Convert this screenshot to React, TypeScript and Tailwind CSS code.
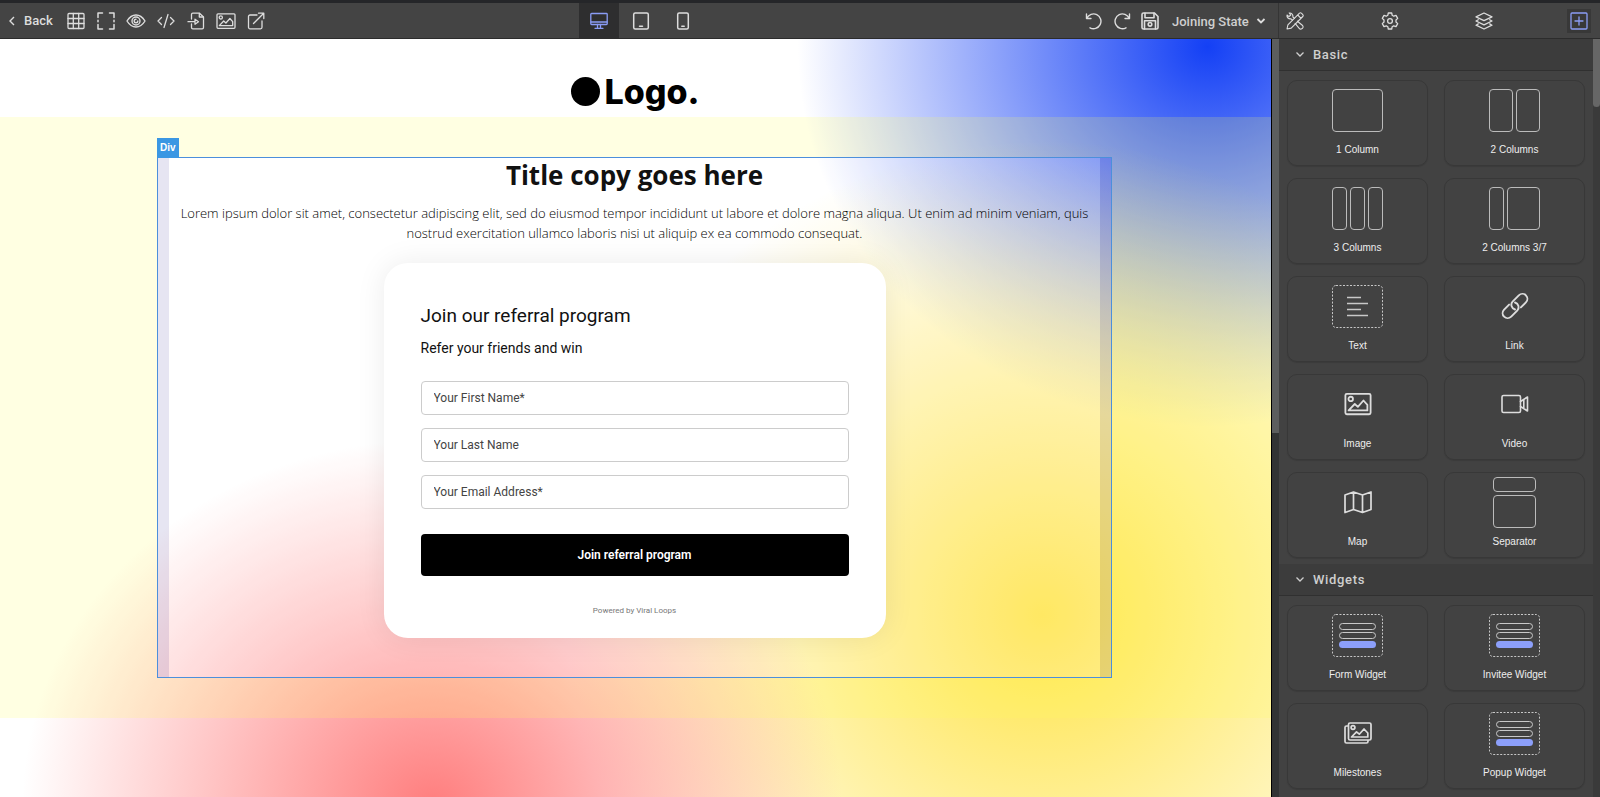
import { useState } from "react";
import clsx from "clsx";
import type { ReactNode } from "react";

const basicBlocks: Block[] = [
  { label: "1 Column", icon: <Columns cells={["flex-1"]} /> },
  { label: "2 Columns", icon: <Columns cells={["flex-1", "flex-1"]} /> },
  { label: "3 Columns", icon: <Columns cells={["flex-1", "flex-1", "flex-1"]} /> },
  { label: "2 Columns 3/7", icon: <Columns cells={["w-[15px]", "flex-1"]} /> },
  { label: "Text", icon: <TextBlock /> },
  { label: "Link", icon: <LinkIcon /> },
  { label: "Image", icon: <ImageIcon size={28} /> },
  { label: "Video", icon: <VideoIcon /> },
  { label: "Map", icon: <MapIcon /> },
  { label: "Separator", icon: <SeparatorBlock /> },
];

const widgetBlocks: Block[] = [
  { label: "Form Widget", icon: <WidgetBlock /> },
  { label: "Invitee Widget", icon: <WidgetBlock /> },
  { label: "Milestones", icon: <GalleryIcon /> },
  { label: "Popup Widget", icon: <WidgetBlock /> },
];

const devices = [
  { id: "desktop", label: "Desktop", icon: <DesktopIcon /> },
  { id: "tablet", label: "Tablet", icon: <TabletIcon /> },
  { id: "mobile", label: "Mobile", icon: <MobileIcon /> },
];

const tools = [
  { label: "Show grid", icon: <GridIcon /> },
  { label: "Fullscreen", icon: <FullscreenIcon /> },
  { label: "Preview", icon: <EyeIcon /> },
  { label: "View code", icon: <CodeIcon /> },
  { label: "Import", icon: <ImportIcon /> },
  { label: "Images", icon: <ImageIcon size={20} /> },
  { label: "Open in new tab", icon: <ExternalIcon /> },
];

const panels = [
  { id: "styles", label: "Styles", icon: <ToolsIcon /> },
  { id: "settings", label: "Settings", icon: <GearIcon /> },
  { id: "layers", label: "Layers", icon: <LayersIcon /> },
  { id: "blocks", label: "Blocks", icon: <PlusIcon /> },
];

const fields = [
  { id: "firstName", label: "Your First Name*", type: "text" },
  { id: "lastName", label: "Your Last Name", type: "text" },
  { id: "email", label: "Your Email Address*", type: "email" },
];

export default function App() {
  return (
    <div className="flex h-screen flex-col overflow-hidden border-t-[3px] border-[#252629] bg-[#424242] font-['Roboto',sans-serif] text-[#dddddd]">
      <TopBar />
      <div className="flex min-h-0 flex-1">
        <Canvas />
        <div className="w-2 shrink-0 border-l border-black bg-[#323434]">
          <div className="h-[52%] bg-[#5c5e5e]" />
        </div>
        <BlocksPanel />
      </div>
    </div>
  );
}

function TopBar() {
  const [device, setDevice] = useState("desktop");
  const [panel, setPanel] = useState("blocks");

  return (
    <header className="flex h-9 shrink-0 border-b border-[#2c2c2c] bg-[#444444]">
      <div className="grid flex-1 grid-cols-[1fr_auto_1fr] items-center border-r border-[#353535] pl-1">
        <div className="flex items-center">
          <button type="button" className="mr-2 flex items-center gap-2 pl-1 text-[13px] font-medium">
            <svg width="8" height="10" viewBox="0 0 8 10" fill="none" stroke="currentColor" strokeWidth="1.4">
              <path d="M6 1 2 5l4 4" />
            </svg>
            Back
          </button>
          {tools.map((t) => (
            <button
              key={t.label}
              type="button"
              aria-label={t.label}
              className="flex h-8 w-[30px] items-center justify-center"
            >
              {t.icon}
            </button>
          ))}
        </div>

        <div className="flex h-full gap-0.5">
          {devices.map((d) => (
            <button
              key={d.id}
              type="button"
              aria-label={d.label}
              onClick={() => setDevice(d.id)}
              className={clsx(
                "flex h-[35px] w-10 items-center justify-center",
                device === d.id && "bg-[#2e2e2f] text-[#8a9cf5]",
              )}
            >
              {d.icon}
            </button>
          ))}
        </div>

        <div className="flex items-center justify-end pr-2">
          <button type="button" aria-label="Undo" className="flex w-7 justify-center">
            <UndoIcon />
          </button>
          <button type="button" aria-label="Redo" className="flex w-7 justify-center">
            <span className="-scale-x-100">
              <UndoIcon />
            </span>
          </button>
          <button type="button" aria-label="Save" className="flex w-7 justify-center">
            <SaveIcon />
          </button>
          <div className="relative ml-2">
            <select
              aria-label="State"
              className="w-[98px] appearance-none bg-transparent text-[13px] font-medium text-[#cfcfcf]"
            >
              <option>Joining State</option>
            </select>
            <svg
              className="pointer-events-none absolute right-1 top-2"
              width="10"
              height="8"
              viewBox="0 0 10 8"
              fill="none"
              stroke="currentColor"
              strokeWidth="1.8"
            >
              <path d="m1.5 2 3.500 3.500L8.500 2" />
            </svg>
          </div>
        </div>
      </div>

      <nav className="flex w-[321px] items-center justify-between pl-1 pr-[9px]">
        {panels.map((p) => (
          <button
            key={p.id}
            type="button"
            aria-label={p.label}
            onClick={() => setPanel(p.id)}
            className={clsx(
              "flex size-6 items-center justify-center",
              panel === p.id && "bg-[#383838] text-[#8a9cf5]",
            )}
          >
            {p.icon}
          </button>
        ))}
      </nav>
    </header>
  );
}

function Canvas() {
  return (
    <main className="min-w-0 flex-1 overflow-hidden bg-white bg-[radial-gradient(410px_365px_at_34%_101%,#ff7e7e,#ff7e7e00),radial-gradient(circle_475px_at_82%_76%,#ffe448,#ffe44800),radial-gradient(410px_380px_at_95%_1%,#1440f5,#1440f500)] text-[#111111]">
      <div className="flex items-center justify-center gap-1 pb-[11px] pt-[38px]">
        <span className="size-[29px] rounded-full bg-black" />
        <span className="font-['Inter',sans-serif] text-[34px] font-extrabold leading-[29px] text-black">
          Logo.
        </span>
      </div>

      <section className="border-y-[40px] border-l-[157px] border-r-[159px] border-[#ffff5e2e]">
        <div className="relative border-x-[12px] border-[#5a50aa26] bg-white/15 bg-clip-padding pb-10 outline outline-1 -outline-offset-1 outline-[#4c8fdc]">
          <span className="absolute -left-3 -top-[19px] bg-[#3b97e3] px-[3px] font-['Liberation_Sans',sans-serif] text-[10px] font-bold leading-5 text-white">
            Div
          </span>
          <h1 className="text-center font-['Open_Sans',sans-serif] text-[26px] font-bold leading-9">
            Title copy goes here
          </h1>
          <p className="mt-2.5 text-center font-['Open_Sans',sans-serif] text-[13px] font-light leading-5 text-black">
            Lorem ipsum dolor sit amet, consectetur adipiscing elit, sed do eiusmod tempor incididunt ut
            labore et dolore magna aliqua. Ut enim ad minim veniam, quis nostrud exercitation ullamco
            laboris nisi ut aliquip ex ea commodo consequat.
          </p>
          <ReferralForm />
        </div>
      </section>
    </main>
  );
}

function ReferralForm() {
  return (
    <form
      onSubmit={(e) => e.preventDefault()}
      className="mx-auto mt-5 flex max-w-[502px] flex-col rounded-3xl bg-white px-[37px] pb-[21px] pt-[41px] shadow-[0_0_30px_rgba(0,0,0,0.08)]"
    >
      <h2 className="text-[19px] leading-6">Join our referral program</h2>
      <p className="mt-2.5 text-[14px] leading-5">Refer your friends and win</p>
      <div className="mt-[23px] flex flex-col gap-[13px]">
        {fields.map((f) => (
          <input
            key={f.id}
            id={f.id}
            type={f.type}
            aria-label={f.label}
            placeholder={f.label}
            className="h-[34px] rounded border border-[#cccccc] bg-white px-3 text-[12px] placeholder:text-[#444444]"
          />
        ))}
      </div>
      <button type="submit" className="mt-[25px] h-[42px] rounded bg-black text-[12px] font-semibold text-white">
        Join referral program
      </button>
      <p className="mt-[29px] text-center text-[8px] leading-3 text-[#777777]">Powered by Viral Loops</p>
    </form>
  );
}

function BlocksPanel() {
  return (
    <aside className="flex w-[321px] shrink-0">
      <div className="min-w-0 flex-1 overflow-hidden">
        <BlockSection title="Basic" blocks={basicBlocks} />
        <BlockSection title="Widgets" blocks={widgetBlocks} />
      </div>
      <div className="w-[7px] bg-[#3a3a3a]">
        <div className="h-[68px] rounded-b bg-[#666666]" />
      </div>
    </aside>
  );
}

type Block = { label: string; icon: ReactNode };

function BlockSection({ title, blocks }: { title: string; blocks: Block[] }) {
  const [open, setOpen] = useState(true);

  return (
    <section>
      <button
        type="button"
        aria-expanded={open}
        onClick={() => setOpen(!open)}
        className="flex h-8 w-full items-center gap-2 border-b border-[#303030] bg-[#3c3c3c] pl-4 text-[13px] font-medium tracking-wider text-[#cfcfcf]"
      >
        <svg width="10" height="8" viewBox="0 0 10 8" fill="none" stroke="currentColor" strokeWidth="1.3">
          <path d="m1.500 1.500 3.500 3.500 3.500-3.500" />
        </svg>
        {title}
      </button>
      {open && (
        <div className="grid grid-cols-2 gap-x-4 gap-y-3 pb-1.5 pl-2 pr-2 pt-[9px]">
          {blocks.map((b) => (
            <button
              key={b.label}
              type="button"
              className="flex h-[86px] flex-col items-center rounded-[10px] border border-[#383838] pt-[7px] shadow-[0_1px_1px_rgba(0,0,0,0.12)]"
            >
              <span className="flex h-11 items-center justify-center">{b.icon}</span>
              <span className="mt-3 font-['Liberation_Sans',sans-serif] text-[10px] leading-3 text-[#eeeeee]">
                {b.label}
              </span>
            </button>
          ))}
        </div>
      )}
    </section>
  );
}

function Columns({ cells }: { cells: string[] }) {
  return (
    <span className="flex h-[43px] w-[51px] gap-[3px]">
      {cells.map((c, i) => (
        <span key={i} className={clsx("rounded border border-[#bbbbbb]", c)} />
      ))}
    </span>
  );
}

function DottedBox({ children }: { children: ReactNode }) {
  return (
    <svg width="51" height="43" viewBox="0 0 51 43" fill="none" stroke="#c8c8c8">
      <rect x=".5" y=".5" width="50" height="42" rx="3.500" strokeDasharray="2 1.500" />
      {children}
    </svg>
  );
}

function TextBlock() {
  return (
    <DottedBox>
      <path d="M15 12.500h14M15 18.500h21M15 24.500h14M15 30.500h21" strokeWidth="1.700" />
    </DottedBox>
  );
}

function WidgetBlock() {
  return (
    <DottedBox>
      <rect x="7.500" y="9.500" width="36" height="6" rx="3" />
      <rect x="7.500" y="18.500" width="36" height="6" rx="3" />
      <rect x="7" y="27" width="37" height="7" rx="3.500" fill="#8c9ffa" stroke="none" />
    </DottedBox>
  );
}

function SeparatorBlock() {
  return (
    <span className="flex h-[51px] w-[43px] shrink-0 flex-col gap-[3px]">
      <span className="h-[15px] rounded border border-[#bbbbbb]" />
      <span className="flex-1 rounded border border-[#bbbbbb]" />
    </span>
  );
}

function Icon({
  size = 18,
  box = 18,
  width = 1.3,
  children,
}: {
  size?: number;
  box?: number;
  width?: number;
  children: ReactNode;
}) {
  return (
    <svg
      width={size}
      height={size}
      viewBox={`0 0 ${box} ${box}`}
      fill="none"
      stroke="currentColor"
      strokeWidth={width}
      strokeLinecap="round"
      strokeLinejoin="round"
    >
      {children}
    </svg>
  );
}

function GridIcon() {
  return (
    <Icon>
      <rect x="1" y="1.500" width="16" height="15" rx="1" />
      <path d="M1 6.500h16M1 11.500h16M6.300 1.500v15M11.700 1.500v15" />
    </Icon>
  );
}

function FullscreenIcon() {
  return (
    <Icon width={1.5}>
      <path d="M1 5.500V1h4.500M12.500 1H17v4.500M17 12.500V17h-4.500M5.500 17H1v-4.500M1 8.300v1.400M17 8.300v1.400" />
    </Icon>
  );
}

function EyeIcon() {
  return (
    <Icon size={20} box={20} width={1.4}>
      <path d="M1 10c2.500-4 5.500-6 9-6s6.500 2 9 6c-2.500 4-5.500 6-9 6s-6.500-2-9-6Z" />
      <circle cx="10" cy="10" r="4" />
      <path d="M10 8.200A1.800 1.800 0 1 0 11.800 10" />
    </Icon>
  );
}

function CodeIcon() {
  return (
    <Icon>
      <path d="M4.500 5.500 1 9l3.500 3.500M13.500 5.500 17 9l-3.500 3.500M11 2.500l-4 13" />
    </Icon>
  );
}

function ImportIcon() {
  return (
    <Icon>
      <path d="M4.500 7V2.500a1.300 1.300 0 0 1 1.300-1.300h6.700L16.500 5v10.500a1.300 1.300 0 0 1-1.300 1.300H5.800a1.300 1.300 0 0 1-1.300-1.300V12" />
      <path d="M12.300 1.400V5h4M1 9.700h7M8 7.200l3.500 2.500L8 12.200Z" />
    </Icon>
  );
}

function ImageIcon({ size }: { size: number }) {
  return (
    <Icon size={size} box={20} width={1.3}>
      <rect x="1" y="2.800" width="18" height="14.500" rx="1" />
      <circle cx="4.800" cy="6.400" r="1.600" />
      <path d="m3.300 14.600 4.400-4.600 2.200 2 4-4.500 2.800 3.100v4Z" />
    </Icon>
  );
}

function ExternalIcon() {
  return (
    <Icon>
      <path d="M10 3H3a1.500 1.500 0 0 0-1.500 1.500v10.800a1.500 1.500 0 0 0 1.500 1.500h10.500a1.500 1.500 0 0 0 1.500-1.500V9M6.500 11.500 16.500 1.500M11.500 1.200h5.300v5.300" />
    </Icon>
  );
}

function DesktopIcon() {
  return (
    <Icon>
      <rect x=".8" y="1.500" width="16.400" height="11" rx=".8" />
      <path d="M1 10h16M7.500 12.500V16M10.500 12.500V16M5 16.300h8" />
    </Icon>
  );
}

function TabletIcon() {
  return (
    <Icon width={1.5}>
      <rect x="1.700" y="1" width="14.600" height="16" rx="1.500" />
      <path d="M7.500 14.300h3" />
    </Icon>
  );
}

function MobileIcon() {
  return (
    <Icon width={1.5}>
      <rect x="3.700" y="1" width="10.600" height="16" rx="1.500" />
      <path d="M7.800 14.300h2.400" />
    </Icon>
  );
}

function UndoIcon() {
  return (
    <Icon width={1.4}>
      <path d="M1.500 2v4.500H6M1.800 6.300A7.400 7.400 0 1 1 5 15.800" />
    </Icon>
  );
}

function SaveIcon() {
  return (
    <Icon width={1.6}>
      <path d="M1 2.500A1.500 1.500 0 0 1 2.500 1h11L17 4.500v11a1.500 1.500 0 0 1-1.500 1.500h-13A1.500 1.500 0 0 1 1 15.500Z" />
      <path d="M4 1.200v4.600h9V1.200M3.500 17V8.800h11V17" />
      <circle cx="9" cy="12.300" r="1.800" />
    </Icon>
  );
}

function ToolsIcon() {
  return (
    <Icon width={1.1}>
      {/* pencil */}
      <path d="M1 17l.9-4.200L13.500 1.200a1.300 1.300 0 0 1 1.900 0l1.400 1.400a1.300 1.300 0 0 1 0 1.900L5.200 16.100ZM11.700 3l3.300 3.300" />
      {/* wrench, interrupted where the pencil crosses it */}
      <path d="M6.500 8.200 5 6.800A3.300 3.300 0 0 1 1 3l2 1.600L4.700 3 3.200 1a3.300 3.300 0 0 1 3.700 4l1.600 1.400M11.400 9.200l4.900 4a2.200 2.200 0 1 1-3.100 3.100l-4.100-4.900" />
    </Icon>
  );
}

function GearIcon() {
  return (
    <Icon>
      <path d="M7.300 1h3.400l.5 2.300 1.500.9 2.300-.8 1.700 3L15 8v2l1.700 1.600-1.700 3-2.300-.8-1.500.9-.5 2.300H7.300l-.5-2.300-1.500-.9-2.300.8-1.700-3L3 10V8L1.300 6.400l1.700-3 2.300.8 1.500-.9Z" />
      <circle cx="9" cy="9" r="2.400" />
    </Icon>
  );
}

function LayersIcon() {
  return (
    <Icon>
      <path d="m9 1 8 3.800-8 3.800-8-3.800Z" />
      <path d="M3.300 7.700 1 9l8 3.900L17 9l-2.300-1.300M3.300 11.900 1 13.200 9 17l8-3.800-2.300-1.300" />
    </Icon>
  );
}

function PlusIcon() {
  return (
    <Icon>
      <rect x="1" y="1" width="16" height="16" rx="1" />
      <path d="M9 5v8M5 9h8" />
    </Icon>
  );
}

function LinkIcon() {
  return (
    <Icon size={28} box={28} width={1.9}>
      <path d="M14 17.500a4.900 4.900 0 0 1-2.200-8.200l6-6a5 5 0 0 1 7.100 7.100l-5 5" />
      <path d="M14 10.500a4.900 4.900 0 0 1 2.200 8.200l-6 6a5 5 0 0 1-7.100-7.100l5-5" />
    </Icon>
  );
}

function VideoIcon() {
  return (
    <Icon size={28} box={28} width={1.6}>
      <rect x="1" y="5.500" width="18.500" height="17" rx="1.500" />
      <path d="M19.500 11.500 26.500 7v14l-7-4.500M22.800 9.500v9" />
    </Icon>
  );
}

function MapIcon() {
  return (
    <Icon size={28} box={28} width={1.7}>
      <path d="m1 7 8.500-3 9 3L27 4v17.500l-8.500 3-9-3-8.500 3ZM9.500 4v17.500M18.500 7v17.500" />
    </Icon>
  );
}

function GalleryIcon() {
  return (
    <Icon size={28} box={28} width={1.7}>
      <rect x="4.500" y="4" width="22.500" height="17" rx="1.500" />
      <path d="M4 7H2.500A1.500 1.500 0 0 0 1 8.500v14A1.500 1.500 0 0 0 2.500 24h20a1.500 1.500 0 0 0 1.500-1.500V21.500" />
      <circle cx="9" cy="8.500" r="1.900" />
      <path d="m7.500 18 5-5.200 2.800 2.400L20 10l3.800 4v4Z" />
    </Icon>
  );
}
